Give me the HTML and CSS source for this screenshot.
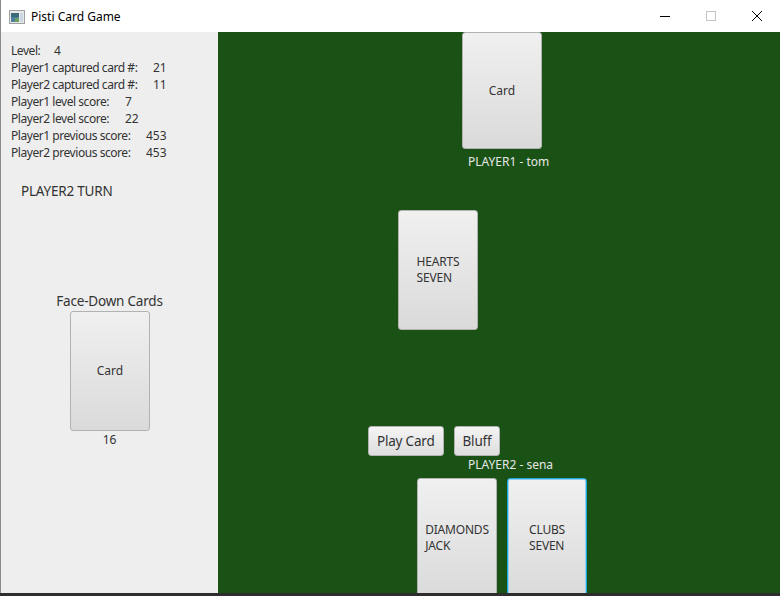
FILE: index.html
```html
<!DOCTYPE html>
<html>
<head>
<meta charset="utf-8">
<link rel="stylesheet" href="styles.css">
</head>
<body>
<div class="window">
  <div class="titlebar">
    <svg class="app-icon" width="16" height="14" viewBox="0 0 16 14">
      <rect x="0.5" y="0.5" width="15" height="13" fill="#e8e8e8" stroke="#a0a0a0"/>
      <rect x="2" y="3" width="8" height="9" fill="#4f7f9e"/>
      <rect x="2" y="3" width="8" height="4" fill="#3b6b7a"/>
      <rect x="6" y="8" width="4" height="4" fill="#6aa060"/>
      <rect x="11" y="3" width="3" height="9" fill="#c8d8e0"/>
    </svg>
    <span class="title">Pisti Card Game</span>
    <div class="controls">
      <span class="ctl"><svg width="12" height="12" viewBox="0 0 12 12"><line x1="1" y1="6.5" x2="11" y2="6.5" stroke="#000" stroke-width="1"/></svg></span>
      <span class="ctl"><svg width="12" height="12" viewBox="0 0 12 12"><rect x="1.5" y="1.5" width="9" height="9" fill="none" stroke="#c4c4c4" stroke-width="1"/></svg></span>
      <span class="ctl"><svg width="12" height="12" viewBox="0 0 12 12"><path d="M1 1 L11 11 M11 1 L1 11" stroke="#000" stroke-width="1"/></svg></span>
    </div>
  </div>
  <div class="content">
    <div class="side">
      <div class="stats">
        <div class="stat"><span class="k k-level">Level:</span><span>4</span></div>
        <div class="stat"><span class="k k-cap">Player1 captured card #:</span><span>21</span></div>
        <div class="stat"><span class="k k-cap">Player2 captured card #:</span><span>11</span></div>
        <div class="stat"><span class="k k-lvl">Player1 level score:</span><span>7</span></div>
        <div class="stat"><span class="k k-lvl">Player2 level score:</span><span>22</span></div>
        <div class="stat"><span class="k k-prev">Player1 previous score:</span><span>453</span></div>
        <div class="stat"><span class="k k-prev">Player2 previous score:</span><span>453</span></div>
      </div>
      <div class="turn">PLAYER2 TURN</div>
      <div class="deck">
        <div class="deck-label">Face-Down Cards</div>
        <div class="card">Card</div>
        <div class="deck-count">16</div>
      </div>
    </div>
    <div class="table">
      <div class="row-top"><div class="card card-top">Card</div></div>
      <div class="player p1">PLAYER1 - tom</div>
      <div class="row-mid"><div class="card"><span>HEARTS<br>SEVEN</span></div></div>
      <div class="row-btns">
        <button class="btn">Play Card</button>
        <button class="btn">Bluff</button>
      </div>
      <div class="player p2">PLAYER2 - sena</div>
      <div class="row-hand">
        <div class="card"><span>DIAMONDS<br>JACK</span></div>
        <div class="card focused"><span>CLUBS<br>SEVEN</span></div>
      </div>
    </div>
  </div>
</div>
</body>
</html>
```

FILE: styles.css
```css
html, body {
  margin: 0;
  padding: 0;
  background: #2e2e2e;
  overflow: hidden;
}
body {
  width: 780px;
  height: 596px;
  font-family: "Noto Sans", "Open Sans", "Liberation Sans", sans-serif;
}
.window {
  width: 780px;
  height: 593px;
  display: flex;
  flex-direction: column;
  background: #ffffff;
}
.titlebar {
  height: 32px;
  flex: none;
  display: flex;
  align-items: center;
  background: #ffffff;
  border-left: 1px solid #8a8a8a;
  box-sizing: border-box;
}
.app-icon {
  margin-left: 8px;
  margin-top: 1px;
}
.title {
  margin-left: 6px;
  font-size: 12px;
  color: #000;
  font-family: "Noto Sans", "Open Sans", sans-serif;
}
.controls {
  margin-left: auto;
  display: flex;
  height: 32px;
}
.ctl {
  width: 46px;
  height: 32px;
  display: flex;
  align-items: center;
  justify-content: center;
}
.content {
  flex: 1;
  display: flex;
  min-height: 0;
  border-left: 1px solid #8a8a8a;
}
.side {
  width: 217px;
  flex: none;
  background: #eeeeee;
  display: flex;
  flex-direction: column;
  color: #333333;
}
.stats {
  padding: 10px 0 0 10px;
}
.stat {
  font-size: 12px;
  line-height: 17px;
  height: 17px;
  white-space: nowrap;
}
.k {
  display: inline-block;
  letter-spacing: -0.45px;
}
.k-level { width: 43px; }
.k-cap { width: 142px; }
.k-lvl { width: 114px; }
.k-prev { width: 135px; }
.turn {
  margin: 21px 0 0 20px;
  font-size: 13.5px;
  line-height: 18px;
  letter-spacing: -0.2px;
}
.deck {
  margin-top: 92px;
  width: 217px;
  display: flex;
  flex-direction: column;
  align-items: center;
}
.deck-label {
  font-size: 13.5px;
  line-height: 18px;
  margin-bottom: 1px;
  letter-spacing: -0.2px;
}
.deck .card {
  margin-left: 1px;
}
.deck-count {
  font-size: 12px;
  line-height: 16px;
  margin-top: 1px;
}
.card {
  width: 80px;
  height: 120px;
  box-sizing: border-box;
  border: 1px solid #b2b2b2;
  border-radius: 3px;
  background: linear-gradient(#f0f0f0, #dadada);
  display: flex;
  align-items: center;
  justify-content: center;
  font-size: 12px;
  line-height: 16px;
  color: #333333;
  flex: none;
}
.card span {
  text-align: left;
  display: block;
  letter-spacing: -0.2px;
}
.card.focused {
  border: 1px solid #1fa5dc;
  box-shadow: inset 0 0 0 1px #8fd3ee;
}
.table {
  flex: 1;
  background: #1a5216;
  display: flex;
  flex-direction: column;
  overflow: hidden;
}
.row-top {
  padding-left: 244px;
}
.card-top {
  height: 117px;
}
.player {
  color: #e6e6e6;
  font-size: 12px;
  line-height: 16px;
}
.p1 {
  margin: 5px 0 0 250px;
}
.row-mid {
  margin: 40px 0 0 180px;
}
.row-btns {
  margin: 96px 0 0 150px;
  display: flex;
  gap: 10px;
}
.btn {
  height: 30px;
  padding: 0 8px;
  box-sizing: border-box;
  border: 1px solid #b2b2b2;
  border-radius: 3px;
  background: linear-gradient(#f4f4f4, #dedede);
  font-family: "Noto Sans", "Open Sans", sans-serif;
  font-size: 13.5px;
  letter-spacing: -0.2px;
  color: #333333;
}
.p2 {
  margin: 1px 0 0 250px;
}
.row-hand {
  margin: 5px 0 0 199px;
  display: flex;
  gap: 10px;
}
```
